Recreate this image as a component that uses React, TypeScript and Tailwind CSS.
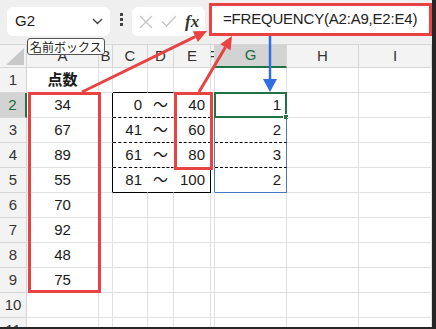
import React from 'react'

const COLS = ['A', 'B', 'C', 'D', 'E', 'F', 'G', 'H', 'I']

// row -> column -> value
const DATA: Record<number, Record<number, string>> = {
  1: { 0: '点数' },
  2: { 0: '34', 2: '0', 3: '～', 4: '40', 6: '1' },
  3: { 0: '67', 2: '41', 3: '～', 4: '60', 6: '2' },
  4: { 0: '89', 2: '61', 3: '～', 4: '80', 6: '3' },
  5: { 0: '55', 2: '81', 3: '～', 4: '100', 6: '2' },
  6: { 0: '70' },
  7: { 0: '92' },
  8: { 0: '48' },
  9: { 0: '75' },
}

const ROWS = [1, 2, 3, 4, 5, 6, 7, 8, 9, 10, 11]

function rightBorder(r: number, c: number) {
  const inTable = r >= 2 && r <= 5
  if (inTable && (c === 1 || c === 4)) return 'border-r-black'
  if (inTable && (c === 2 || c === 3)) return 'border-r-white'
  if (r >= 3 && r <= 5 && (c === 5 || c === 6)) return 'border-r-[#4a78c9]'
  return 'border-r-[#e1e1e1]'
}

function bottomBorder(r: number, c: number) {
  const tableCol = c >= 2 && c <= 4
  if (r === 1 && tableCol) return 'border-b-black'
  if (r >= 2 && r <= 4 && (tableCol || c === 6)) return 'border-b-black [border-bottom-style:dashed]'
  if (r === 5 && tableCol) return 'border-b-black'
  if (r === 5 && c === 6) return 'border-b-[#4a78c9]'
  return 'border-b-[#e1e1e1]'
}

function align(c: number) {
  if (c === 0 || c === 3) return 'justify-center'
  if (c === 2 || c === 4 || c === 6) return 'justify-end pr-[5px]'
  return 'justify-start'
}

export default function App() {
  return (
    <div
      className="relative w-[436px] h-[329px] overflow-hidden bg-white border-r-4 border-b-2 border-[#262626] text-[15px] text-[#1a1a1a]"
      style={{ fontFamily: '"Liberation Sans", "Noto Sans CJK JP", sans-serif' }}
    >
      {/* Toolbar */}
      <div className="h-[44px] bg-[#efefef] flex items-start pt-[3px]">
        <div className="mt-[4px] ml-[7px] w-[103px] h-[29px] bg-white rounded-md flex items-center justify-between pl-[8px] pr-[7px]">
          <span className="text-[15px]">G2</span>
          <svg width="11" height="7" viewBox="0 0 11 7" fill="none" stroke="#444" strokeWidth="1.4">
            <path d="M1 1l4.5 4.5L10 1" />
          </svg>
        </div>
        <div className="w-[22px] h-[33px] flex flex-col items-center justify-center gap-[2px]">
          <span className="w-[3px] h-[3px] bg-[#444]" />
          <span className="w-[3px] h-[3px] bg-[#444]" />
          <span className="w-[3px] h-[3px] bg-[#444]" />
        </div>
        <div className="mt-[4px] w-[73px] h-[29px] bg-white rounded-md flex items-center pl-[7px] gap-[8px]">
          <svg width="14" height="14" viewBox="0 0 14 14" stroke="#c4c4c4" strokeWidth="1.3">
            <path d="M1 1l12 12M13 1L1 13" />
          </svg>
          <svg width="16" height="13" viewBox="0 0 16 13" fill="none" stroke="#c4c4c4" strokeWidth="1.3">
            <path d="M1 6.5l4.5 4.5L15 1" />
          </svg>
          <span
            className="italic font-bold text-[17px] text-[#333] leading-none"
            style={{ fontFamily: '"Liberation Serif", serif' }}
          >
            fx
          </span>
        </div>
        <div className="ml-[4px] w-[223px] h-[33px] bg-white border-[3px] border-[#e84242] flex items-center pl-[11px] text-[15px] text-[#222] tracking-[-0.2px] whitespace-nowrap overflow-hidden">
          =FREQUENCY(A2:A9,E2:E4)
        </div>
      </div>

      {/* Sheet */}
      <div className="grid grid-cols-[27px_72px_14px_35px_26px_37px_4px_72px_72px_73px] grid-rows-[24px] auto-rows-[25px]">
        {/* header row */}
        <div className="relative bg-[#f3f3f3] border-r border-b border-t border-[#d6d6d6]">
          <svg className="absolute right-[2px] bottom-[2px]" width="18" height="17" viewBox="0 0 18 17">
            <path d="M18 0L18 17L0 17Z" fill="#c8c8c8" />
          </svg>
        </div>
        {COLS.map((col, c) =>
          c === 6 ? (
            <div key={col} className="bg-[#d3d3d3] border-t border-r border-[#d6d6d6] border-b-2 border-b-[#217346] flex items-center justify-center text-[#1e6b3d]">
              {col}
            </div>
          ) : (
            <div key={col} className="bg-[#f3f3f3] border-t border-r border-b border-[#d6d6d6] flex items-center justify-center text-[#333] overflow-hidden">
              {col}
            </div>
          )
        )}

        {ROWS.map((r) => (
          <React.Fragment key={r}>
            {r === 2 ? (
              <div className="bg-[#d3d3d3] border-b border-[#d6d6d6] border-r-2 border-r-[#217346] flex items-center justify-center text-[#1e6b3d]">
                {r}
              </div>
            ) : (
              <div className="bg-[#f3f3f3] border-r border-b border-[#d6d6d6] flex items-center justify-center text-[#333]">
                {r}
              </div>
            )}
            {COLS.map((col, c) => {
              const v = DATA[r]?.[c] ?? ''
              return (
                <div
                  key={col}
                  className={`relative border-r border-b ${rightBorder(r, c)} ${bottomBorder(r, c)} flex items-center overflow-visible whitespace-nowrap ${align(c)} ${r === 1 && c === 0 ? 'font-bold' : ''}`}
                >
                  {v}
                  {r === 2 && c === 6 && (
                    <span className="absolute -left-[1px] -top-[1px] -right-[1px] -bottom-[1px] border-2 border-[#217346]">
                      <span className="absolute -right-[4px] -bottom-[4px] w-[6px] h-[6px] bg-[#217346] border border-white" />
                    </span>
                  )}
                </div>
              )
            })}
          </React.Fragment>
        ))}
      </div>

      {/* Tooltip */}
      <div
        className="absolute left-[27px] top-[38px] px-[2px] h-[17px] bg-white border border-[#555] rounded-[3px] text-[12px] leading-[15px] text-[#222]"
        style={{ fontFamily: '"Noto Sans CJK JP", sans-serif' }}
      >
        名前ボックス
      </div>

      {/* Annotations */}
      <svg className="absolute left-0 top-0 pointer-events-none" width="436" height="329" viewBox="0 0 436 329">
        <rect x="29.5" y="93.5" width="70" height="198" fill="none" stroke="#e84242" strokeWidth="3" />
        <rect x="175.5" y="93.5" width="36" height="75" fill="none" stroke="#e84242" strokeWidth="3" />
        <line x1="82" y1="92" x2="195.3" y2="36.7" stroke="#e84242" strokeWidth="3" />
        <polygon points="207,31 197.9,42.1 192.7,31.3" fill="#e84242" />
        <line x1="199" y1="92" x2="225.4" y2="47.2" stroke="#e84242" strokeWidth="3" />
        <polygon points="232,36 230.6,50.3 220.2,44.2" fill="#e84242" />
        <line x1="270" y1="36" x2="270" y2="80" stroke="#2f6fe0" strokeWidth="2.5" />
        <polygon points="263,79 277,79 270,92" fill="#2f6fe0" />
      </svg>
    </div>
  )
}
